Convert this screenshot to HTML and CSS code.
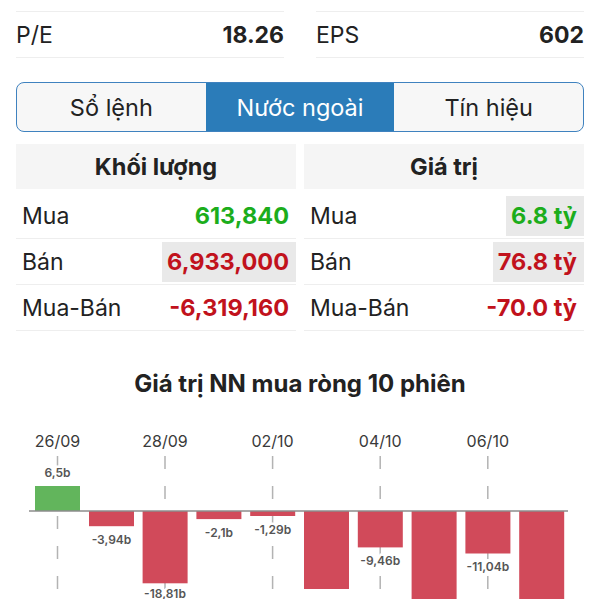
FILE: index.html
```html
<!DOCTYPE html>
<html lang="vi">
<head>
    <meta charset="UTF-8">
    <meta name="viewport" content="width=device-width, initial-scale=1.0">
    <title>Nước ngoài</title>
    <link rel="stylesheet" href="styles.css">
</head>
<body>
    <div class="stats">
        <div class="stat-row empty"></div>
        <div class="stat-row empty"></div>
        <div class="stat-row"><span>P/E</span><b>18.26</b></div>
        <div class="stat-row"><span>EPS</span><b>602</b></div>
    </div>

    <div class="tabs">
        <div class="tab">Sổ lệnh</div>
        <div class="tab active">Nước ngoài</div>
        <div class="tab">Tín hiệu</div>
    </div>

    <div class="tables">
        <div class="table">
            <div class="table-head">Khối lượng</div>
            <div class="table-row"><span>Mua</span><b class="up">613,840</b></div>
            <div class="table-row"><span>Bán</span><b class="down mark">6,933,000</b></div>
            <div class="table-row"><span>Mua-Bán</span><b class="down">-6,319,160</b></div>
        </div>
        <div class="table">
            <div class="table-head">Giá trị</div>
            <div class="table-row"><span>Mua</span><b class="up mark">6.8 tỷ</b></div>
            <div class="table-row"><span>Bán</span><b class="down mark">76.8 tỷ</b></div>
            <div class="table-row"><span>Mua-Bán</span><b class="down">-70.0 tỷ</b></div>
        </div>
    </div>

    <h3 class="chart-title">Giá trị NN mua ròng 10 phiên</h3>
    <svg class="chart" width="600" height="200" viewBox="0 0 600 200">
        <g class="grid">
            <line x1="57.5" y1="57" x2="57.5" y2="200"/>
            <line x1="165" y1="57" x2="165" y2="200"/>
            <line x1="272.6" y1="57" x2="272.6" y2="200"/>
            <line x1="380.2" y1="57" x2="380.2" y2="200"/>
            <line x1="487.8" y1="57" x2="487.8" y2="200"/>
        </g>
        <g class="dates">
            <text x="57.5" y="48">26/09</text>
            <text x="165" y="48">28/09</text>
            <text x="272.6" y="48">02/10</text>
            <text x="380.2" y="48">04/10</text>
            <text x="487.8" y="48">06/10</text>
        </g>
        <g class="bars">
            <rect class="pos" x="35" y="87" width="45" height="25"/>
            <rect x="89" y="112" width="45" height="15.2"/>
            <rect x="142.6" y="112" width="45" height="72.3"/>
            <rect x="196.4" y="112" width="45" height="8.1"/>
            <rect x="250.2" y="112" width="45" height="5"/>
            <rect x="304" y="112" width="45" height="78"/>
            <rect x="357.8" y="112" width="45" height="36.4"/>
            <rect x="411.6" y="112" width="45" height="88"/>
            <rect x="465.4" y="112" width="45" height="42.5"/>
            <rect x="519.2" y="112" width="45" height="88"/>
        </g>
        <line class="axis" x1="29" y1="112" x2="568" y2="112"/>
        <g class="values">
            <text x="57.5" y="78">6,5b</text>
            <text x="111.5" y="145">-3,94b</text>
            <text x="165" y="199">-18,81b</text>
            <text x="218.9" y="138">-2,1b</text>
            <text x="272.7" y="135">-1,29b</text>
            <text x="380.3" y="166">-9,46b</text>
            <text x="487.9" y="172">-11,04b</text>
        </g>
    </svg>
</body>
</html>
```

FILE: styles.css
```css
body {
    margin: 0;
    background-color: white;
    color: #222;
    font-family: Inter, "Liberation Sans", sans-serif;
    overflow: hidden;
}
.stats {
    display: grid;
    grid-template-columns: 1fr 1fr;
    column-gap: 32px;
    margin: -34px 16px 0;
}
.stat-row {
    display: flex;
    justify-content: space-between;
    align-items: center;
    height: 45px;
    border-bottom: 1px solid #eeeeee;
    font-size: 23px;
    white-space: nowrap;
}
.stat-row b {
    font-weight: 700;
}
.tabs {
    display: flex;
    margin: 24px 16px 0;
    height: 48px;
    border: 1.5px solid #3f82bf;
    border-radius: 8px;
    overflow: hidden;
    background-color: #f7f7f7;
}
.tab {
    flex: 1;
    display: flex;
    align-items: center;
    justify-content: center;
    font-size: 23.5px;
    color: #222;
}
.tab.active {
    background-color: #2b7cb9;
    color: white;
}
.tables {
    display: flex;
    gap: 8px;
    margin: 12px 16px 0;
}
.table {
    flex: 1;
}
.table-head {
    height: 45px;
    line-height: 45px;
    margin-bottom: 4px;
    background-color: #f5f5f5;
    text-align: center;
    font-size: 23.5px;
    font-weight: 700;
}
.table-row {
    display: flex;
    justify-content: space-between;
    align-items: center;
    height: 45px;
    padding-left: 6px;
    border-bottom: 1px solid #eeeeee;
    font-size: 23px;
}
.table-row span {
    color: #222;
}
.table-row b {
    font-size: 23.5px;
    font-weight: 700;
    padding: 0 7px 0 5px;
    height: 40px;
    line-height: 40px;
}
.table-row b.mark {
    background-color: #e9e9e9;
}
.up {
    color: #1cad1c;
}
.down {
    color: #c1121c;
}
.chart-title {
    margin: 38px 0 0;
    height: 30px;
    line-height: 30px;
    text-align: center;
    font-size: 24px;
    font-weight: 700;
}
.chart {
    display: block;
}
.grid line {
    stroke: #b3b3b3;
    stroke-width: 1.5;
    stroke-dasharray: 13 17;
}
.dates text {
    font-size: 16px;
    fill: #3a3a3a;
    text-anchor: middle;
}
.bars rect {
    fill: #d14a5a;
}
.bars rect.pos {
    fill: #62b55c;
}
.axis {
    stroke: #8c8c8c;
    stroke-width: 1.5;
}
.values text {
    font-size: 12px;
    font-weight: 600;
    fill: #555;
    text-anchor: middle;
    stroke: white;
    stroke-width: 5px;
    paint-order: stroke;
}
```
